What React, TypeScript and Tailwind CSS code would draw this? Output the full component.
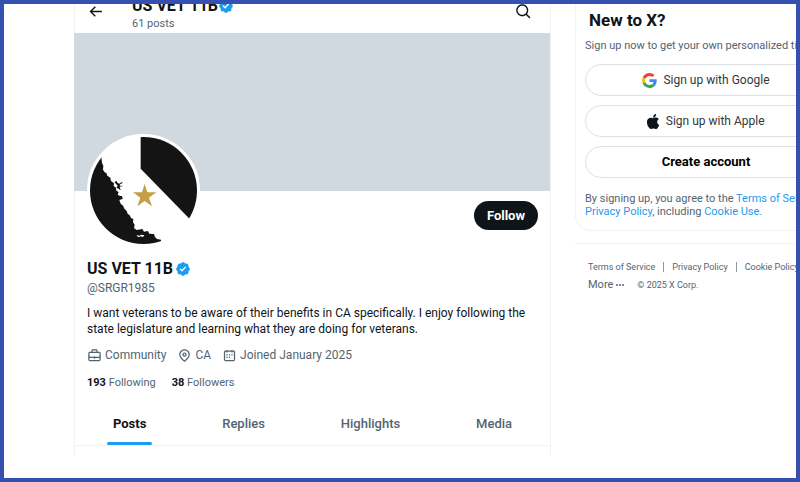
import type { ReactNode } from "react";

const tabs = ["Posts", "Replies", "Highlights", "Media"];

function VerifiedBadge() {
  return (
    <svg viewBox="0 0 22 22" className="size-4 shrink-0" role="img" aria-label="Verified account">
      <path
        fill="#1d9bf0"
        d="M20.396 11c-.018-.646-.215-1.275-.57-1.816-.354-.54-.852-.972-1.438-1.246.223-.607.27-1.264.14-1.897-.131-.634-.437-1.218-.882-1.687-.47-.445-1.053-.75-1.687-.882-.633-.13-1.29-.083-1.897.14-.273-.587-.704-1.086-1.245-1.44S11.647 1.62 11 1.604c-.646.017-1.273.213-1.813.568s-.969.854-1.24 1.44c-.608-.223-1.267-.272-1.902-.14-.635.13-1.22.436-1.69.882-.445.47-.749 1.055-.878 1.688-.13.633-.08 1.29.144 1.896-.587.274-1.087.705-1.443 1.245-.356.54-.555 1.17-.574 1.817.02.647.218 1.276.574 1.817.356.54.856.972 1.443 1.245-.224.606-.274 1.263-.144 1.896.13.634.433 1.218.877 1.688.47.443 1.054.747 1.687.878.633.132 1.29.084 1.897-.136.274.586.705 1.084 1.246 1.439.54.354 1.17.551 1.816.569.647-.016 1.276-.213 1.817-.567s.972-.854 1.245-1.44c.604.239 1.266.296 1.903.164.636-.132 1.22-.447 1.68-.907.46-.46.776-1.044.908-1.681s.075-1.299-.165-1.903c.586-.274 1.084-.705 1.439-1.246.354-.54.551-1.17.569-1.816z"
      />
      <path
        fill="#fff"
        d="M9.662 14.85l-3.429-3.428 1.293-1.302 2.072 2.072 4.4-4.794 1.347 1.246z"
      />
    </svg>
  );
}

function Avatar() {
  return (
    <svg
      viewBox="30 34 321 321"
      className="size-[113px] rounded-full border-3 border-white bg-white"
      role="img"
      aria-label="US VET 11B"
    >
      <path fill="#141414" d="M182 30V129L332 283H400V30Z" />
      <path
        fill="#141414"
        d="M64 94L66 112L70 120L69 132L74 140L79 142L82 150L91 156L93 166L102 173L101 181L108 186L109 195L116 199L113 207L120 211L126 211L128 220L118 223L122 234L130 241L132 248L140 256L143 264L149 269L153 277L160 280L159 290L164 297L162 307L170 313L187 310L192 318L204 316L208 324L222 325L225 334L231 340L243 342V370H0V94Z"
      />
      <path
        fill="#141414"
        d="M103 169L110 166L112 171L118 174L124 170L129 171L120 176L119 180L130 181L119 183L122 194L114 188L109 187L113 180Z"
      />
      <path fill="#fff" d="M169 328L178 330L184 327L193 329L189 334L181 332L175 335Z" />
      <path
        fill="#c49f45"
        d="M194 175L202 200L229 200L207 216L216 242L194 226L172 242L181 216L159 200L186 200Z"
      />
    </svg>
  );
}

function GoogleLogo() {
  return (
    <svg viewBox="0 0 48 48" className="size-[15px]" aria-hidden="true">
      <path fill="#EA4335" d="M24 9.5c3.54 0 6.71 1.22 9.21 3.6l6.85-6.85C35.9 2.38 30.47 0 24 0 14.62 0 6.51 5.38 2.56 13.22l7.98 6.19C12.43 13.72 17.74 9.5 24 9.5z" />
      <path fill="#4285F4" d="M46.98 24.55c0-1.57-.15-3.09-.38-4.55H24v9.02h12.94c-.58 2.96-2.26 5.48-4.78 7.18l7.73 6c4.51-4.18 7.09-10.36 7.09-17.65z" />
      <path fill="#FBBC05" d="M10.53 28.59c-.48-1.45-.76-2.99-.76-4.59s.27-3.14.76-4.59l-7.98-6.19C.92 16.46 0 20.12 0 24c0 3.88.92 7.54 2.56 10.78l7.97-6.19z" />
      <path fill="#34A853" d="M24 48c6.48 0 11.93-2.13 15.89-5.81l-7.73-6c-2.15 1.45-4.92 2.3-8.16 2.3-6.26 0-11.57-4.22-13.47-9.91l-7.98 6.19C6.51 42.62 14.62 48 24 48z" />
    </svg>
  );
}

function AppleLogo() {
  return (
    <svg viewBox="3 1 18 22" className="h-[15px]" fill="#0f1419" aria-hidden="true">
      <path d="M16.365 1.43c0 1.14-.493 2.27-1.177 3.08-.744.9-1.99 1.57-2.987 1.57-.12 0-.23-.02-.3-.03-.01-.06-.04-.22-.04-.39 0-1.15.572-2.27 1.206-2.98.804-.94 2.142-1.64 3.248-1.68.03.13.05.28.05.43zm4.565 15.71c-.03.07-.463 1.58-1.518 3.12-.945 1.34-1.94 2.71-3.43 2.71-1.517 0-1.9-.88-3.63-.88-1.698 0-2.302.91-3.67.91-1.377 0-2.332-1.26-3.428-2.8-1.287-1.82-2.323-4.63-2.323-7.28 0-4.28 2.797-6.55 5.552-6.55 1.448 0 2.675.95 3.6.95.865 0 2.222-1.01 3.902-1.01.613 0 2.886.06 4.374 2.19-.13.09-2.383 1.37-2.383 4.19 0 3.26 2.854 4.42 2.955 4.45z" />
    </svg>
  );
}

function MetaItem({ icon, children }: { icon: ReactNode; children: ReactNode }) {
  return (
    <span className="flex items-center gap-[3px]">
      <svg viewBox="0 0 24 24" className="size-[15px]" fill="currentColor" aria-hidden="true">
        {icon}
      </svg>
      {children}
    </span>
  );
}

function SignupButton({ children, bold }: { children: ReactNode; bold?: boolean }) {
  return (
    <button
      type="button"
      className={`flex h-8 w-full items-center justify-center gap-1.5 rounded-full border border-[#dde2e5] bg-white ${
        bold ? "text-[13px] font-bold text-black" : "text-xs text-[#33373b]"
      }`}
    >
      {children}
    </button>
  );
}

export default function App() {
  return (
    <div className="flex min-h-screen gap-6 overflow-hidden border-4 border-[#3650b2] bg-white pl-[70px] font-['Roboto','Liberation_Sans',sans-serif] text-[#0f1419]">
      <main className="mb-[22px] min-w-0 flex-1 border-x border-[#eff3f4]">
        <header className="flex h-[29px] items-end justify-between overflow-hidden pr-[18px] pl-3">
          <div className="flex items-end gap-7">
            <button type="button" aria-label="Back" className="mb-[13px]">
              <svg viewBox="0 0 24 24" className="size-[17px]" fill="currentColor">
                <path d="M7.414 13l5.043 5.04-1.414 1.42L3.586 12l7.457-7.46 1.414 1.42L7.414 11H21v2H7.414z" />
              </svg>
            </button>
            <div className="pb-[3px]">
              <h2 className="flex items-center text-base leading-4 font-bold">
                US VET 11B
                <VerifiedBadge />
              </h2>
              <p className="mt-1 text-[11px] leading-3 text-[#536471]">61 posts</p>
            </div>
          </div>
          <button type="button" aria-label="Search" className="mb-[13px]">
            <svg viewBox="0 0 24 24" className="size-[17px]" fill="currentColor">
              <path d="M10.25 3.75c-3.59 0-6.5 2.91-6.5 6.5s2.91 6.5 6.5 6.5c1.795 0 3.419-.726 4.596-1.904 1.178-1.177 1.904-2.801 1.904-4.596 0-3.59-2.91-6.5-6.5-6.5zm-8.5 6.5c0-4.694 3.806-8.5 8.5-8.5s8.5 3.806 8.5 8.5c0 1.986-.682 3.815-1.824 5.262l4.781 4.781-1.414 1.414-4.781-4.781c-1.447 1.142-3.276 1.824-5.262 1.824-4.694 0-8.5-3.806-8.5-8.5z" />
            </svg>
          </button>
        </header>

        <div className="-ml-px h-[158px] bg-[#cfd9df]" />

        <section className="px-3">
          <div className="flex items-start justify-between">
            <div className="-mt-[57px]">
              <Avatar />
            </div>
            <button
              type="button"
              className="mt-2.5 h-[29px] rounded-full bg-[#0f1419] px-[13px] text-[13px] font-bold text-white"
            >
              Follow
            </button>
          </div>

          <h1 className="mt-3 flex items-center gap-0.5 text-base leading-5 font-bold">
            US VET 11B
            <VerifiedBadge />
          </h1>
          <p className="text-xs leading-[18px] text-[#536471]">@SRGR1985</p>
          <p className="mt-2 text-xs leading-4">
            I want veterans to be aware of their benefits in CA specifically. I enjoy following the state
            legislature and learning what they are doing for veterans.
          </p>

          <div className="mt-2.5 flex gap-[11px] text-xs leading-4 text-[#536471]">
            <MetaItem
              icon={
                <path d="M19.5 6H17V4.5C17 3.12 15.88 2 14.5 2h-5C8.12 2 7 3.12 7 4.5V6H4.5C3.12 6 2 7.12 2 8.5v10C2 19.88 3.12 21 4.5 21h15c1.38 0 2.5-1.12 2.5-2.5v-10C22 7.12 20.88 6 19.5 6zM9 4.5c0-.28.23-.5.5-.5h5c.28 0 .5.22.5.5V6H9V4.5zm11 14c0 .28-.22.5-.5.5h-15c-.27 0-.5-.22-.5-.5v-3.04c.59.35 1.27.54 2 .54h5v1h2v-1h5c.73 0 1.41-.19 2-.54v3.04zm0-6.49c0 1.1-.9 1.99-2 1.99h-5v-1h-2v1H6c-1.1 0-2-.9-2-2V8.5c0-.28.23-.5.5-.5h15c.28 0 .5.22.5.5v3.51z" />
              }
            >
              Community
            </MetaItem>
            <MetaItem
              icon={
                <path d="M12 7c-1.93 0-3.5 1.57-3.5 3.5S10.07 14 12 14s3.5-1.57 3.5-3.5S13.93 7 12 7zm0 5c-.827 0-1.5-.673-1.5-1.5S11.173 9 12 9s1.5.673 1.5 1.5S12.827 12 12 12zm0-10c-4.687 0-8.5 3.813-8.5 8.5 0 5.967 7.621 11.116 7.945 11.332l.555.37.555-.37c.324-.216 7.945-5.365 7.945-11.332C20.5 5.813 16.687 2 12 2zm0 17.77c-1.665-1.241-6.5-5.196-6.5-9.27C5.5 6.916 8.416 4 12 4s6.5 2.916 6.5 6.5c0 4.073-4.835 8.028-6.5 9.27z" />
              }
            >
              CA
            </MetaItem>
            <MetaItem
              icon={
                <path d="M7 4V3h2v1h6V3h2v1h1.5C19.89 4 21 5.12 21 6.5v12c0 1.38-1.11 2.5-2.5 2.5h-13C4.12 21 3 19.88 3 18.5v-12C3 5.12 4.12 4 5.5 4H7zm0 2H5.5c-.27 0-.5.22-.5.5v12c0 .28.23.5.5.5h13c.28 0 .5-.22.5-.5v-12c0-.28-.22-.5-.5-.5H17v1h-2V6H9v1H7V6zm0 6h2v-2H7v2zm0 4h2v-2H7v2zm4-4h2v-2h-2v2zm0 4h2v-2h-2v2zm4-4h2v-2h-2v2z" />
              }
            >
              Joined January 2025
            </MetaItem>
          </div>

          <div className="mt-3 flex gap-4 text-[11px] leading-4 text-[#536471]">
            <a href="#following">
              <b className="text-[#0f1419]">193</b> Following
            </a>
            <a href="#followers">
              <b className="text-[#0f1419]">38</b> Followers
            </a>
          </div>
        </section>

        <nav className="mt-3 flex border-b border-[#eff3f4] text-[13px]">
          {tabs.map((tab, i) => (
            <a key={tab} href={`#${tab.toLowerCase()}`} className="flex flex-auto justify-center">
              <span className="flex h-[42px] flex-col">
                <span
                  className={`flex flex-1 items-center px-1.5 pt-0.5 ${
                    i === 0 ? "font-bold" : "font-medium text-[#536471]"
                  }`}
                >
                  {tab}
                </span>
                <span className={`h-[3px] rounded-full ${i === 0 ? "bg-[#1d9bf0]" : ""}`} />
              </span>
            </a>
          ))}
        </nav>
      </main>

      <aside className="w-[221px] shrink-0 overflow-hidden">
        <section className="w-[262px] rounded-b-2xl border border-t-0 border-[#eff3f4] px-[9px] pt-1.5 pb-3">
          <h2 className="px-1 text-[17px] leading-5 font-bold">New to X?</h2>
          <p className="mt-2 text-[11px] leading-4 whitespace-nowrap text-[#536471]">
            Sign up now to get your own personalized timeline!
          </p>
          <div className="mt-2.5 flex flex-col gap-[9px]">
            <SignupButton>
              <GoogleLogo />
              Sign up with Google
            </SignupButton>
            <SignupButton>
              <AppleLogo />
              Sign up with Apple
            </SignupButton>
            <SignupButton bold>Create account</SignupButton>
          </div>
          <p className="mt-3.5 -mr-6 text-[11px] leading-[13px] text-[#536471]">
            By signing up, you agree to the <a href="#terms" className="text-[#1d9bf0]">Terms of Service</a> and{" "}
            <a href="#privacy" className="text-[#1d9bf0]">Privacy Policy</a>, including{" "}
            <a href="#cookies" className="text-[#1d9bf0]">Cookie Use.</a>
          </p>
        </section>

        <footer className="mt-3 w-[262px] border-t border-[#eff3f4] px-[13px] pt-3.5 text-[9px] leading-[18px] text-[#536471]">
          <div className="flex items-center whitespace-nowrap">
            <a href="#terms">Terms of Service</a>
            <span className="mx-2 h-2.5 w-px bg-[#8b98a1]" />
            <a href="#privacy">Privacy Policy</a>
            <span className="mx-2 h-2.5 w-px bg-[#8b98a1]" />
            <a href="#cookies">Cookie Policy</a>
          </div>
          <div className="flex gap-3">
            <button type="button" className="flex items-center gap-0.5 text-[11px]">
              More
              <svg viewBox="0 0 10 4" className="h-1 w-2.5" fill="currentColor" aria-hidden="true">
                <circle cx="2" cy="2" r="1" />
                <circle cx="5" cy="2" r="1" />
                <circle cx="8" cy="2" r="1" />
              </svg>
            </button>
            <span>© 2025 X Corp.</span>
          </div>
        </footer>
      </aside>
    </div>
  );
}
